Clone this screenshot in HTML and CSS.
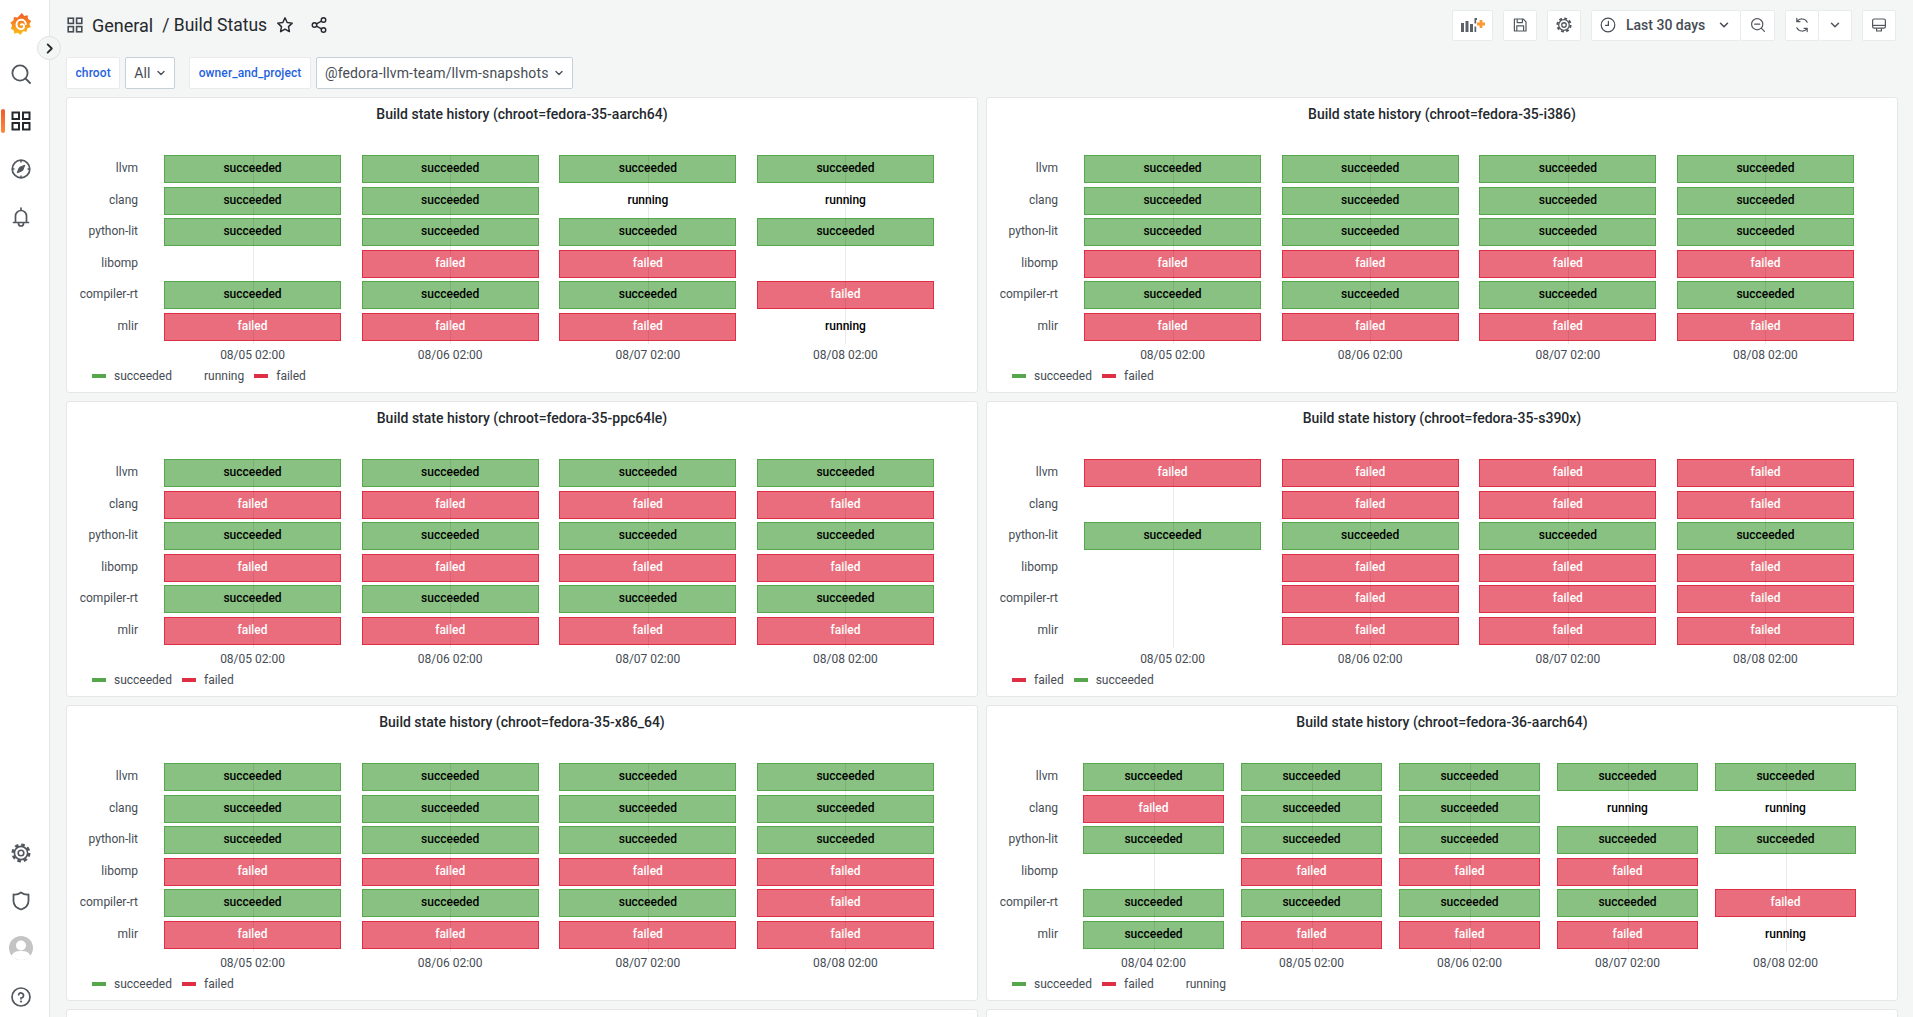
FILE: index.html
```html
<!DOCTYPE html>
<html lang="en">
<head>
<meta charset="UTF-8">
<title>Build Status - Dashboards - Grafana</title>
<link rel="stylesheet" href="styles.css">
</head>
<body>

<svg class="defs" width="0" height="0">
  <symbol id="chev" viewBox="0 0 12 12"><path d="M3 4.500 6 7.500 9 4.500" fill="none" stroke="currentColor" stroke-width="1.300" stroke-linecap="round" stroke-linejoin="round"/></symbol>
  <symbol id="apps" viewBox="0 0 20 20"><g fill="none" stroke="currentColor" stroke-width="2"><rect x="1.500" y="1.500" width="6.500" height="6.500"/><rect x="12" y="1.500" width="6.500" height="6.500"/><rect x="1.500" y="12" width="6.500" height="6.500"/><rect x="12" y="12" width="6.500" height="6.500"/></g></symbol>
  <symbol id="cog" viewBox="0 0 20 20"><g fill="none" stroke="currentColor"><circle cx="10" cy="10" r="2.800" stroke-width="1.600"/><circle cx="10" cy="10" r="6.600" stroke-width="1.600"/><circle cx="10" cy="10" r="8.200" stroke-width="2.600" stroke-dasharray="3.600 2.840"/></g></symbol>
</svg>

<nav class="sidebar">
  <svg class="logo" viewBox="0 0 24 26">
    <defs><linearGradient id="flame" x1="0" y1="1" x2="0" y2="0"><stop offset="0" stop-color="#fcc116"/><stop offset="1" stop-color="#f05a28"/></linearGradient></defs>
    <path fill="url(#flame)" d="M13 0l2.600 3.500 3.900-1 .6 4.200 3.400 2.300-2 3.400 1.600 3.700-3.900 1.100-.9 4.100-4-.7L11.400 25l-3-2.800-3.900 1.200-.9-4L.5 17.800 2 14 0 10.700l3.500-2.300.5-4 4 .7z"/>
    <path d="M17.500 12.500a5.300 5.300 0 1 0-5.300 5.800 3.500 3.500 0 0 0 3.300-3.900 2.300 2.300 0 0 0-3.600-1.300" fill="none" stroke="#fff" stroke-width="2.200" stroke-linecap="round"/>
  </svg>
  <svg class="nav-icon icon-search" viewBox="0 0 20 20"><circle cx="9" cy="9" r="7.600" fill="none" stroke="currentColor" stroke-width="1.800"/><path d="M14.500 14.500 19 19" stroke="currentColor" stroke-width="1.800" stroke-linecap="round"/></svg>
  <div class="nav-active"><svg class="nav-icon nav-apps"><use href="#apps"/></svg></div>
  <svg class="nav-icon icon-explore" viewBox="0 0 20 20"><circle cx="10" cy="10" r="8.800" fill="none" stroke="currentColor" stroke-width="1.700"/><path d="M10 1.500v2M10 16.500v2M1.500 10h2M16.500 10h2" stroke="currentColor" stroke-width="1.500"/><path d="M13.800 6.200 11.600 11.600 6.200 13.800 8.400 8.400z" fill="currentColor" stroke="currentColor" stroke-width="1" stroke-linejoin="round"/></svg>
  <svg class="nav-icon icon-bell" viewBox="0 0 20 20"><path d="M2.500 15.500h15M4.500 15.500V9a5.500 5.500 0 0 1 11 0v6.500M10 1v2.500M7.500 15.500v1a2.500 2.500 0 0 0 5 0v-1" fill="none" stroke="currentColor" stroke-width="1.700" stroke-linecap="round"/></svg>
  <div class="nav-spacer"></div>
  <svg class="nav-icon icon-cog"><use href="#cog"/></svg>
  <svg class="nav-icon icon-shield" viewBox="0 0 20 20"><path d="M10 1.500C12.500 3.300 14.800 3.800 17.500 3.500V10c0 4-3 7-7.500 8.500C5.500 17 2.500 14 2.500 10V3.500C5.200 3.800 7.500 3.300 10 1.500z" fill="none" stroke="currentColor" stroke-width="1.800" stroke-linejoin="round"/></svg>
  <svg class="avatar" viewBox="0 0 24 24"><circle cx="12" cy="12" r="12" fill="#c4c4c4"/><circle cx="12" cy="9.500" r="5" fill="#fff"/><path d="M2.500 19.500C5 15.500 8 15 12 15s7 .5 9.500 4.500A12 12 0 0 1 12 24a12 12 0 0 1-9.500-4.500z" fill="#fff"/></svg>
  <svg class="nav-icon icon-help" viewBox="0 0 20 20"><circle cx="10" cy="10" r="9" fill="none" stroke="currentColor" stroke-width="1.700"/><path d="M7.600 7.800A2.500 2.500 0 1 1 10 11v.8" fill="none" stroke="currentColor" stroke-width="1.700" stroke-linecap="round"/><circle cx="10" cy="14.500" r="1.100" fill="currentColor"/></svg>
</nav>

<button class="expander"><svg viewBox="0 0 12 12"><path d="M4 1.500 8.500 6 4 10.500" fill="none" stroke="currentColor" stroke-width="2" stroke-linecap="round" stroke-linejoin="round"/></svg></button>

<main class="main">

  <header class="topbar">
    <svg class="crumb-icon"><use href="#apps"/></svg>
    <span class="crumb">General</span>
    <span class="crumb crumb-page">/ Build Status</span>
    <svg class="head-icon star" viewBox="0 0 20 20"><path d="M10 2l2.400 5.200 5.600.7-4.100 3.900 1 5.600L10 14.600l-4.900 2.800 1-5.600L2 7.900l5.600-.7z" fill="none" stroke="currentColor" stroke-width="1.600" stroke-linejoin="round"/></svg>
    <svg class="head-icon share" viewBox="0 0 20 20"><g fill="none" stroke="currentColor" stroke-width="1.600"><circle cx="15" cy="4.500" r="2.500"/><circle cx="5" cy="10" r="2.500"/><circle cx="15" cy="15.500" r="2.500"/><path d="M7.200 8.800 12.800 5.700M7.200 11.200l5.600 3.100"/></g></svg>

    <div class="tools">
      <button class="tool tool-add"><svg viewBox="0 0 24 14"><path d="M0 5h3v9H0zM4.500 3h3v11h-3zM9 6h3v8H9zM13.500 0H16v2h-.8v3.500h-1.700zM13.500 8.500h1.700V14h-1.700z" fill="#5c6169"/><path d="M18.600 2h2.800v2.600H24v2.800h-2.600V10h-2.800V7.400H16V4.600h2.600z" fill="#ff9830"/></svg></button>
      <button class="tool"><svg viewBox="0 0 20 20"><path d="M3 2.500h11l3.500 3.500v11.500H3zM6.500 2.500v4.500h6.500V2.500M6 17.500v-6.500h8.500v6.500" fill="none" stroke="currentColor" stroke-width="1.500" stroke-linejoin="round"/></svg></button>
      <button class="tool"><svg><use href="#cog"/></svg></button>
      <div class="tool-group">
        <button class="tool tool-time">
          <svg viewBox="0 0 20 20"><circle cx="10" cy="10" r="8.500" fill="none" stroke="currentColor" stroke-width="1.500"/><path d="M10.500 5.500v5H7" fill="none" stroke="currentColor" stroke-width="1.500" stroke-linecap="round"/></svg>
          <span>Last 30 days</span>
          <svg class="chev"><use href="#chev"/></svg>
        </button>
        <button class="tool"><svg viewBox="0 0 20 20"><circle cx="9" cy="9" r="7" fill="none" stroke="currentColor" stroke-width="1.500"/><path d="M5.800 9h6.400M14 14l4 4" stroke="currentColor" stroke-width="1.500" stroke-linecap="round"/></svg></button>
      </div>
      <div class="tool-group">
        <button class="tool"><svg viewBox="0 0 20 20"><path d="M16.500 6.500A7.500 7.500 0 0 0 3.800 5.500M3.500 13.500a7.500 7.500 0 0 0 12.700 1M3.500 1.800v4h4M16.500 18.200v-4h-4" fill="none" stroke="currentColor" stroke-width="1.500" stroke-linecap="round" stroke-linejoin="round"/></svg></button>
        <button class="tool tool-more"><svg class="chev"><use href="#chev"/></svg></button>
      </div>
      <button class="tool"><svg viewBox="0 0 20 20"><rect x="2" y="2.500" width="16" height="11.500" rx="2" fill="none" stroke="currentColor" stroke-width="1.500"/><path d="M2 10.500h16" stroke="currentColor" stroke-width="1.500"/><path d="M7 14v3.500h6V14" fill="none" stroke="currentColor" stroke-width="1.500"/></svg></button>
    </div>
  </header>

  <div class="variables">
    <label class="var-label">chroot</label>
    <div class="var-value">All <svg class="chev"><use href="#chev"/></svg></div>
    <label class="var-label var-second">owner_and_project</label>
    <div class="var-value">@fedora-llvm-team/llvm-snapshots <svg class="chev"><use href="#chev"/></svg></div>
  </div>

  <div class="panels">

    <section class="panel">
      <h3>Build state history (chroot=fedora-35-aarch64)</h3>
      <div class="chart">
        <div class="labels"><span>llvm</span><span>clang</span><span>python-lit</span><span>libomp</span><span>compiler-rt</span><span>mlir</span></div>
        <div class="cols">
          <div class="col"><b class="ok">succeeded</b><b class="ok">succeeded</b><b class="ok">succeeded</b><b></b><b class="ok">succeeded</b><b class="bad">failed</b><time>08/05 02:00</time></div>
          <div class="col"><b class="ok">succeeded</b><b class="ok">succeeded</b><b class="ok">succeeded</b><b class="bad">failed</b><b class="ok">succeeded</b><b class="bad">failed</b><time>08/06 02:00</time></div>
          <div class="col"><b class="ok">succeeded</b><b class="run">running</b><b class="ok">succeeded</b><b class="bad">failed</b><b class="ok">succeeded</b><b class="bad">failed</b><time>08/07 02:00</time></div>
          <div class="col"><b class="ok">succeeded</b><b class="run">running</b><b class="ok">succeeded</b><b></b><b class="bad">failed</b><b class="run">running</b><time>08/08 02:00</time></div>
        </div>
      </div>
      <ul class="legend"><li class="l-ok">succeeded</li><li>running</li><li class="l-bad">failed</li></ul>
    </section>

    <section class="panel">
      <h3>Build state history (chroot=fedora-35-i386)</h3>
      <div class="chart">
        <div class="labels"><span>llvm</span><span>clang</span><span>python-lit</span><span>libomp</span><span>compiler-rt</span><span>mlir</span></div>
        <div class="cols">
          <div class="col"><b class="ok">succeeded</b><b class="ok">succeeded</b><b class="ok">succeeded</b><b class="bad">failed</b><b class="ok">succeeded</b><b class="bad">failed</b><time>08/05 02:00</time></div>
          <div class="col"><b class="ok">succeeded</b><b class="ok">succeeded</b><b class="ok">succeeded</b><b class="bad">failed</b><b class="ok">succeeded</b><b class="bad">failed</b><time>08/06 02:00</time></div>
          <div class="col"><b class="ok">succeeded</b><b class="ok">succeeded</b><b class="ok">succeeded</b><b class="bad">failed</b><b class="ok">succeeded</b><b class="bad">failed</b><time>08/07 02:00</time></div>
          <div class="col"><b class="ok">succeeded</b><b class="ok">succeeded</b><b class="ok">succeeded</b><b class="bad">failed</b><b class="ok">succeeded</b><b class="bad">failed</b><time>08/08 02:00</time></div>
        </div>
      </div>
      <ul class="legend"><li class="l-ok">succeeded</li><li class="l-bad">failed</li></ul>
    </section>

    <section class="panel">
      <h3>Build state history (chroot=fedora-35-ppc64le)</h3>
      <div class="chart">
        <div class="labels"><span>llvm</span><span>clang</span><span>python-lit</span><span>libomp</span><span>compiler-rt</span><span>mlir</span></div>
        <div class="cols">
          <div class="col"><b class="ok">succeeded</b><b class="bad">failed</b><b class="ok">succeeded</b><b class="bad">failed</b><b class="ok">succeeded</b><b class="bad">failed</b><time>08/05 02:00</time></div>
          <div class="col"><b class="ok">succeeded</b><b class="bad">failed</b><b class="ok">succeeded</b><b class="bad">failed</b><b class="ok">succeeded</b><b class="bad">failed</b><time>08/06 02:00</time></div>
          <div class="col"><b class="ok">succeeded</b><b class="bad">failed</b><b class="ok">succeeded</b><b class="bad">failed</b><b class="ok">succeeded</b><b class="bad">failed</b><time>08/07 02:00</time></div>
          <div class="col"><b class="ok">succeeded</b><b class="bad">failed</b><b class="ok">succeeded</b><b class="bad">failed</b><b class="ok">succeeded</b><b class="bad">failed</b><time>08/08 02:00</time></div>
        </div>
      </div>
      <ul class="legend"><li class="l-ok">succeeded</li><li class="l-bad">failed</li></ul>
    </section>

    <section class="panel">
      <h3>Build state history (chroot=fedora-35-s390x)</h3>
      <div class="chart">
        <div class="labels"><span>llvm</span><span>clang</span><span>python-lit</span><span>libomp</span><span>compiler-rt</span><span>mlir</span></div>
        <div class="cols">
          <div class="col"><b class="bad">failed</b><b></b><b class="ok">succeeded</b><b></b><b></b><b></b><time>08/05 02:00</time></div>
          <div class="col"><b class="bad">failed</b><b class="bad">failed</b><b class="ok">succeeded</b><b class="bad">failed</b><b class="bad">failed</b><b class="bad">failed</b><time>08/06 02:00</time></div>
          <div class="col"><b class="bad">failed</b><b class="bad">failed</b><b class="ok">succeeded</b><b class="bad">failed</b><b class="bad">failed</b><b class="bad">failed</b><time>08/07 02:00</time></div>
          <div class="col"><b class="bad">failed</b><b class="bad">failed</b><b class="ok">succeeded</b><b class="bad">failed</b><b class="bad">failed</b><b class="bad">failed</b><time>08/08 02:00</time></div>
        </div>
      </div>
      <ul class="legend"><li class="l-bad">failed</li><li class="l-ok">succeeded</li></ul>
    </section>

    <section class="panel">
      <h3>Build state history (chroot=fedora-35-x86_64)</h3>
      <div class="chart">
        <div class="labels"><span>llvm</span><span>clang</span><span>python-lit</span><span>libomp</span><span>compiler-rt</span><span>mlir</span></div>
        <div class="cols">
          <div class="col"><b class="ok">succeeded</b><b class="ok">succeeded</b><b class="ok">succeeded</b><b class="bad">failed</b><b class="ok">succeeded</b><b class="bad">failed</b><time>08/05 02:00</time></div>
          <div class="col"><b class="ok">succeeded</b><b class="ok">succeeded</b><b class="ok">succeeded</b><b class="bad">failed</b><b class="ok">succeeded</b><b class="bad">failed</b><time>08/06 02:00</time></div>
          <div class="col"><b class="ok">succeeded</b><b class="ok">succeeded</b><b class="ok">succeeded</b><b class="bad">failed</b><b class="ok">succeeded</b><b class="bad">failed</b><time>08/07 02:00</time></div>
          <div class="col"><b class="ok">succeeded</b><b class="ok">succeeded</b><b class="ok">succeeded</b><b class="bad">failed</b><b class="bad">failed</b><b class="bad">failed</b><time>08/08 02:00</time></div>
        </div>
      </div>
      <ul class="legend"><li class="l-ok">succeeded</li><li class="l-bad">failed</li></ul>
    </section>

    <section class="panel">
      <h3>Build state history (chroot=fedora-36-aarch64)</h3>
      <div class="chart">
        <div class="labels"><span>llvm</span><span>clang</span><span>python-lit</span><span>libomp</span><span>compiler-rt</span><span>mlir</span></div>
        <div class="cols cols-five">
          <div class="col"><b class="ok">succeeded</b><b class="bad">failed</b><b class="ok">succeeded</b><b></b><b class="ok">succeeded</b><b class="ok">succeeded</b><time>08/04 02:00</time></div>
          <div class="col"><b class="ok">succeeded</b><b class="ok">succeeded</b><b class="ok">succeeded</b><b class="bad">failed</b><b class="ok">succeeded</b><b class="bad">failed</b><time>08/05 02:00</time></div>
          <div class="col"><b class="ok">succeeded</b><b class="ok">succeeded</b><b class="ok">succeeded</b><b class="bad">failed</b><b class="ok">succeeded</b><b class="bad">failed</b><time>08/06 02:00</time></div>
          <div class="col"><b class="ok">succeeded</b><b class="run">running</b><b class="ok">succeeded</b><b class="bad">failed</b><b class="ok">succeeded</b><b class="bad">failed</b><time>08/07 02:00</time></div>
          <div class="col"><b class="ok">succeeded</b><b class="run">running</b><b class="ok">succeeded</b><b></b><b class="bad">failed</b><b class="run">running</b><time>08/08 02:00</time></div>
        </div>
      </div>
      <ul class="legend"><li class="l-ok">succeeded</li><li class="l-bad">failed</li><li>running</li></ul>
    </section>

    <section class="panel"></section>
    <section class="panel"></section>

  </div>
</main>

</body>
</html>
```

FILE: styles.css
```css
html, body {
  height: 100%;
  overflow: hidden;
}
body {
  margin: 0;
  display: flex;
  font-family: Roboto, "Liberation Sans", sans-serif;
  font-size: 12px;
  color: #464c54;
  background-color: #f4f5f5;
}
svg {
  display: block;
}
.defs {
  position: absolute;
}
button {
  font-family: inherit;
  border: none;
  padding: 0;
  background: none;
  color: inherit;
}

/* sidebar */
.sidebar {
  flex: 0 0 42px;
  height: 100%;
  padding-right: 7px;
  border-right: 1px solid #e4e5e6;
  background-color: #fff;
  display: flex;
  flex-direction: column;
  align-items: center;
  color: #52575e;
}
.logo {
  width: 22px;
  height: 23px;
  margin-top: 13px;
}
.nav-icon {
  width: 20px;
  height: 20px;
}
.icon-search { margin-top: 28px; }
.nav-active {
  align-self: stretch;
  display: flex;
  justify-content: center;
  margin-top: 25px;
  padding: 2px 0;
  position: relative;
}
.nav-active::before {
  content: "";
  position: absolute;
  left: 1px;
  top: 0;
  width: 4px;
  height: 100%;
  border-radius: 2px;
  background: linear-gradient(#f05a28, #fb8a3c);
}
.nav-apps { color: #24292e; }
.icon-explore { margin-top: 26px; }
.icon-bell { margin-top: 28px; }
.nav-spacer { flex: 1; }
.icon-cog { margin-bottom: 28px; }
.icon-shield { margin-bottom: 25px; }
.avatar {
  width: 24px;
  height: 24px;
  margin-bottom: 27px;
}
.icon-help { margin-bottom: 10px; }
.expander {
  position: absolute;
  left: 37px;
  top: 36px;
  box-sizing: border-box;
  width: 24px;
  height: 24px;
  border-radius: 50%;
  border: 1px solid #e0e1e2;
  background-color: #f4f5f5;
  color: #24292e;
  display: flex;
  align-items: center;
  justify-content: center;
}
.expander svg {
  width: 11px;
  height: 11px;
}

/* top bar */
.main {
  flex: 1;
  min-width: 0;
  padding-left: 16px;
}
.topbar {
  height: 50px;
  display: flex;
  align-items: center;
  color: #24292e;
}
.crumb-icon {
  width: 16px;
  height: 16px;
  margin-right: 9px;
  margin-left: 1px;
  color: #464c54;
}
.crumb {
  font-size: 18px;
}
.crumb-page {
  font-size: 17.5px;
  margin-left: 9px;
}
.head-icon {
  width: 18px;
  height: 18px;
}
.star { margin-left: 9px; }
.share { margin-left: 16px; }
.tools {
  margin-left: auto;
  margin-right: 17px;
  display: flex;
  gap: 10px;
  color: #52575e;
}
.tool {
  height: 31px;
  width: 34px;
  background-color: #fff;
  border: 1px solid #e9eaeb;
  border-radius: 2px;
  box-sizing: border-box;
  display: flex;
  align-items: center;
  justify-content: center;
}
.tool svg {
  width: 16px;
  height: 16px;
}
.tool .chev {
  width: 14px;
  height: 14px;
}
.tool-add {
  width: 41px;
}
.tool-add svg {
  width: 24px;
  height: 14px;
}
.tool-group {
  display: flex;
}
.tool-group .tool + .tool {
  border-left: none;
}
.tool-time {
  width: 150px;
  justify-content: flex-start;
  padding-left: 8px;
  font-size: 14px;
  font-weight: 500;
  color: #464c54;
  gap: 10px;
}
.tool-time .chev {
  margin-left: 2px;
}
.tool-more {
  width: 33px;
}

/* template variables */
.variables {
  height: 32px;
  margin-top: 7px;
  display: flex;
  gap: 5px;
}
.var-label {
  display: flex;
  align-items: center;
  padding: 0 8.5px;
  background-color: #fff;
  border: 1px solid #e9eaeb;
  border-radius: 2px;
  color: #1f62e0;
  font-weight: 500;
  letter-spacing: 0.1px;
}
.var-second {
  margin-left: 9.5px;
}
.var-value {
  display: flex;
  align-items: center;
  gap: 4px;
  padding: 0 7px 0 8px;
  background-color: #fff;
  border: 1px solid #c7d0d9;
  border-radius: 2px;
  font-size: 14px;
  letter-spacing: 0.15px;
}
.var-value .chev {
  width: 12px;
  height: 12px;
}

/* panels */
.panels {
  margin-top: 8px;
  display: grid;
  grid-template-columns: 912px 912px;
  grid-auto-rows: 296px;
  gap: 8px;
}
.panel {
  box-sizing: border-box;
  background-color: #fff;
  border: 1px solid #e5e6e7;
  border-radius: 3px;
}
.panel h3 {
  margin: 0;
  height: 31px;
  line-height: 32px;
  font-size: 14px;
  font-weight: 500;
  text-align: center;
  color: #24292e;
}
.chart {
  display: flex;
  margin-top: 26px;
}
.labels {
  width: 71px;
  display: grid;
  grid-auto-rows: 28px;
  row-gap: 3.6px;
  text-align: right;
}
.labels span {
  line-height: 26px;
}
.cols {
  margin-left: 26px;
  width: 770px;
  display: grid;
  grid-auto-flow: column;
  grid-auto-columns: 1fr;
  column-gap: 20.6px;
}
.cols-five {
  margin-left: 25px;
  width: 773px;
  column-gap: 17px;
}
.col {
  position: relative;
  display: grid;
  grid-template-rows: repeat(6, 28px) auto;
  row-gap: 3.6px;
}
.col::after {
  content: "";
  position: absolute;
  left: 50%;
  top: 0;
  bottom: 18px;
  width: 1px;
  background-color: rgba(36, 41, 46, 0.1);
}
.col b {
  display: block;
  box-sizing: border-box;
  text-align: center;
  line-height: 24px;
  font-weight: 500;
}
.col .ok {
  border: 1px solid #56a64b;
  background-color: rgba(86, 166, 75, 0.7);
  color: #000;
}
.col .bad {
  border: 1px solid #e02f44;
  background-color: rgba(224, 47, 68, 0.7);
  color: #fff;
}
.col .run {
  color: #000;
  line-height: 26px;
}
.col time {
  display: block;
  height: 14px;
  line-height: 14px;
  margin-top: 3.4px;
  text-align: center;
}
.legend {
  list-style: none;
  margin: 6px 0 0;
  padding: 0 0 0 25px;
  display: flex;
  line-height: 16px;
  gap: 10px;
}
.legend li {
  position: relative;
  padding-left: 22px;
}
.legend li::before {
  content: "";
  position: absolute;
  left: 0;
  top: 6px;
  width: 14px;
  height: 4px;
}
.legend .l-ok::before {
  background-color: #56a64b;
}
.legend .l-bad::before {
  background-color: #e02f44;
}
```
